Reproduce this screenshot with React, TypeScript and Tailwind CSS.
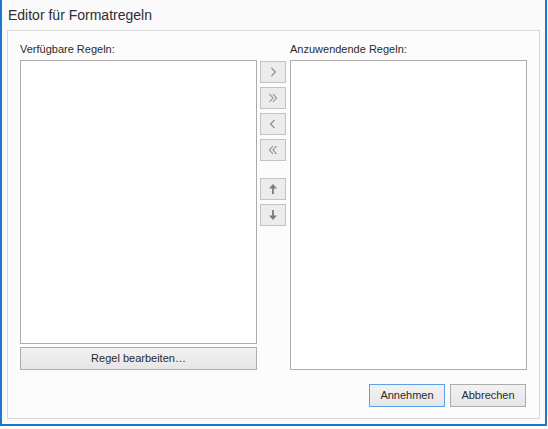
import React from 'react'

const font = { fontFamily: '"Liberation Sans", Arial, sans-serif' }

function Chevron({ dir, double }: { dir: 'left' | 'right'; double?: boolean }) {
  const single = dir === 'right' ? 'M4.5 2 L8.5 6 L4.5 10' : 'M7.5 2 L3.5 6 L7.5 10'
  const dbl =
    dir === 'right'
      ? 'M2.5 2 L6 6 L2.5 10 M6 2 L9.5 6 L6 10'
      : 'M9.5 2 L6 6 L9.5 10 M6 2 L2.5 6 L6 10'
  return (
    <svg width="12" height="12" viewBox="0 0 12 12" fill="none">
      <path d={double ? dbl : single} stroke="#8a8a8a" strokeWidth="1.1" />
    </svg>
  )
}

function Arrow({ dir }: { dir: 'up' | 'down' }) {
  return (
    <svg width="12" height="12" viewBox="0 0 12 12" className={dir === 'down' ? 'rotate-180' : ''}>
      <path d="M6 1 L10 5.5 L2 5.5 Z" fill="#7c7c7c" />
      <rect x="5.1" y="5" width="1.8" height="6" fill="#7c7c7c" />
    </svg>
  )
}

function SideButton({ children }: { children: React.ReactNode }) {
  return (
    <button
      type="button"
      className="flex h-[22px] w-[26px] items-center justify-center border border-[#c3c3c3] bg-[#ececec]"
    >
      {children}
    </button>
  )
}

function DialogButton({ label, primary }: { label: string; primary?: boolean }) {
  return (
    <button
      type="button"
      className={
        'flex h-[23px] w-[76px] items-center justify-center border bg-gradient-to-b from-[#f2f2f2] to-[#e6e6e6] text-[11px] text-[#2b2b2b] ' +
        (primary ? 'border-[#5aa0e8]' : 'border-[#adadad]')
      }
    >
      {label}
    </button>
  )
}

export default function App() {
  return (
    <div className="h-[429px] w-[548px] bg-white" style={font}>
      <div className="flex h-[426px] w-[547px] flex-col border-x-2 border-b-2 border-[#1b78cc] bg-[#fafafa]">
        <div className="h-[30px] pl-[6px] pt-[6px] text-[14px] leading-[18px] text-[#2d2d35]">
          Editor für Formatregeln
        </div>
        <div className="mx-[5px] mb-[5px] flex flex-1 flex-col border border-[#d9d9d9] bg-[#fcfcfc]">
          <div className="flex h-[29px] items-end pb-[4px] text-[11px] leading-[14px] text-[#2b2b2b]">
            <span className="ml-[12px] w-[266px]">Verfügbare Regeln:</span>
            <span className="ml-[4px]">Anzuwendende Regeln:</span>
          </div>
          <div className="flex h-[310px] pl-[12px]">
            <div className="flex w-[237px] flex-col gap-[3px]">
              <div className="flex-1 border border-[#acacac] bg-white" />
              <button
                type="button"
                className="flex h-[23px] items-center justify-center border border-[#adadad] bg-gradient-to-b from-[#f2f2f2] to-[#e6e6e6] text-[11px] text-[#2b2b2b]"
              >
                Regel bearbeiten…
              </button>
            </div>
            <div className="ml-[3px] flex w-[26px] flex-col pt-[1px]">
              <div className="flex flex-col gap-[4px]">
                <SideButton>
                  <Chevron dir="right" />
                </SideButton>
                <SideButton>
                  <Chevron dir="right" double />
                </SideButton>
                <SideButton>
                  <Chevron dir="left" />
                </SideButton>
                <SideButton>
                  <Chevron dir="left" double />
                </SideButton>
              </div>
              <div className="mt-[17px] flex flex-col gap-[4px]">
                <SideButton>
                  <Arrow dir="up" />
                </SideButton>
                <SideButton>
                  <Arrow dir="down" />
                </SideButton>
              </div>
            </div>
            <div className="ml-[4px] w-[237px] border border-[#acacac] bg-white" />
          </div>
          <div className="mt-[14px] flex justify-end gap-[5px] pr-[13px]">
            <DialogButton label="Annehmen" primary />
            <DialogButton label="Abbrechen" />
          </div>
        </div>
      </div>
    </div>
  )
}
